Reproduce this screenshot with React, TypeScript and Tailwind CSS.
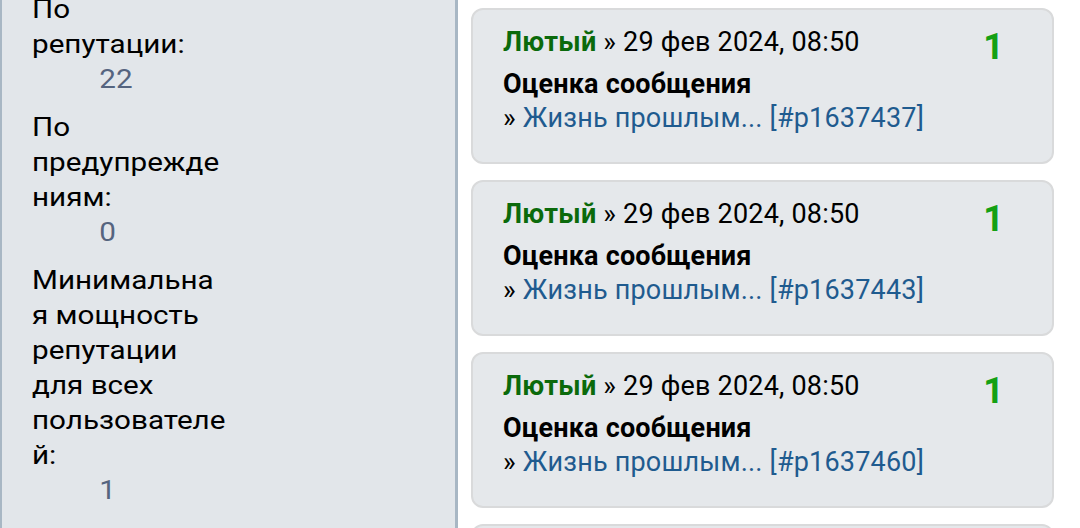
import React from "react";

const cards = ["1637437", "1637443", "1637460"];

function Card({ id }: { id: string }) {
  return (
    <div className="h-[156px] shrink-0 rounded-[12px] border-2 border-[#d9dadb] bg-[#e5e8eb] pl-[30px] pr-[48px] pt-[15px] flex justify-between">
      <div className="text-[27px] leading-[35px] text-black tracking-[0.2px]">
        <div>
          <span className="font-bold text-[#0b6a0b]">Лютый</span>
          <span> » 29 фев 2024, 08:50</span>
        </div>
        <div className="mt-[7px] font-bold">Оценка сообщения</div>
        <div className="-mt-[1px]">
          » <span className="text-[#1f5b8f]">Жизнь прошлым... [#p{id}]</span>
        </div>
      </div>
      <div className="text-[36px] leading-[40px] pt-[2px] font-bold text-[#14a014]">1</div>
    </div>
  );
}

export default function App() {
  return (
    <div
      className="w-[1080px] h-[528px] overflow-hidden bg-white flex"
      style={{ fontFamily: "Roboto, 'Noto Sans', sans-serif" }}
    >
      <div className="w-[458px] h-full shrink-0 bg-[#e2e6ea] border-l-2 border-r-[3px] border-[#a8b7c4] pl-[30px] text-[26px] leading-[35px] text-black">
        <div className="-mt-[8px] origin-left scale-x-[1.14]">
          <div>По<br />репутации:</div>
          <div className="pl-[59px] text-[#55647f]">22</div>
          <div className="mt-[13px]">По<br />предупрежде<br />ниям:</div>
          <div className="pl-[59px] text-[#55647f]">0</div>
          <div className="mt-[13px]">
            Минимальна<br />я мощность<br />репутации<br />для всех<br />пользователе<br />й:
          </div>
          <div className="pl-[59px] text-[#55647f]">1</div>
        </div>
      </div>
      <div className="flex-1 pl-[13px] pt-[8px] flex flex-col gap-[16px] pr-[26px]">
        {cards.map((c) => (
          <Card key={c} id={c} />
        ))}
        <Card id="1637461" />
      </div>
    </div>
  );
}
